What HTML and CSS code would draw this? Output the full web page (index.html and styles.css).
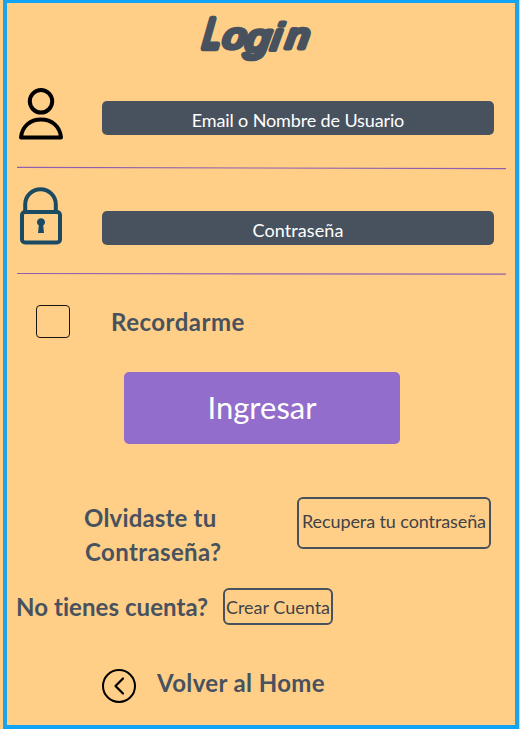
FILE: index.html
```html
<!DOCTYPE html>
<html lang="es">
<head>
<meta charset="utf-8">
<title>Login</title>
<link rel="stylesheet" href="styles.css">
</head>
<body>
<main class="screen">
  <h1 class="title">
    <svg width="130" height="64" viewBox="0 0 130 64"><g class="title-text"><text class="capital" transform="translate(10 42) skewX(-8) scale(.74 1)">L</text><text transform="translate(8.500 42) skewX(-8) scale(1.160 1)"><tspan x="18.500" y="0">o</tspan><tspan class="tail" x="38" y="2.500">g</tspan><tspan class="stem" x="60" y="1.500">i</tspan><tspan x="73" y="0">n</tspan></text></g></svg>
  </h1>
  <form class="form">
    <div class="field field-user">
      <svg class="icon-user" width="46" height="54" viewBox="0 0 46 54" fill="none" stroke="#000" stroke-width="4" stroke-linejoin="round"><circle cx="23" cy="14.300" r="11.200"/><path d="M3 50.500C4 39.500 12 32.500 23 32.500s19 7 20 18Z"/></svg>
      <div class="input">Email o Nombre de Usuario</div>
    </div>
    <svg class="rule" width="490" height="4" viewBox="0 0 490 4"><path d="M0 1.400L489 2.600"/></svg>
    <div class="field field-lock">
      <svg class="icon-lock" width="46" height="60" viewBox="0 0 46 60" fill="none" stroke="#1b4b63" stroke-width="4"><path d="M7.200 26V18.500a15.300 15.300 0 0 1 30.600 0v7.500"/><rect x="4" y="26" width="38" height="30.500" rx="3"/><path d="M23 32.200a4 4 0 0 0-2.200 7.300L20 47h6l-.8-7.500a4 4 0 0 0-2.200-7.300Z" fill="#1b4b63" stroke="none"/></svg>
      <div class="input password">Contraseña</div>
    </div>
    <svg class="rule rule-last" width="490" height="4" viewBox="0 0 490 4"><path d="M0 1.500L489 2.200"/></svg>
    <div class="remember"><span class="box"></span><span class="label">Recordarme</span></div>
    <button class="submit" type="button">Ingresar</button>
  </form>
  <div class="recover">
    <p class="label question">Olvidaste tu<br><span class="second">Contraseña?</span></p>
    <button class="outline big" type="button">Recupera tu contraseña</button>
  </div>
  <div class="signup">
    <span class="label">No tienes cuenta?</span>
    <button class="outline small" type="button">Crear Cuenta</button>
  </div>
  <div class="home">
    <svg width="36" height="36" viewBox="0 0 36 36" fill="none" stroke="#000" stroke-width="2"><circle cx="18" cy="18" r="16"/><path d="M22 10.500L14.500 18l7.500 7.500" stroke-width="2.200" stroke-linecap="round" stroke-linejoin="round"/></svg>
    <span class="label">Volver al Home</span>
  </div>
</main>
</body>
</html>
```
FILE: styles.css
```css
* { box-sizing: border-box; }
body { margin: 0; background: #ffcf88; font-family: Lato, "Liberation Sans", sans-serif; font-variant-ligatures: none; }
svg { display: block; flex: none; }
.screen { display: flex; flex-direction: column; width: 516px; height: 729px; margin-left: 3px; border: 4px solid #1fa2e8; border-top: 3px solid #0fa4f5; border-bottom-color: #0fa4f5; overflow: hidden; }
.title { margin: 3px 0 0 185px; height: 64px; }
.title-text { font: italic 400 35px "Liberation Sans", sans-serif; fill: #48525e; stroke: #48525e; stroke-width: 4.800px; stroke-linejoin: round; stroke-linecap: round; }
.capital { font-size: 42px; stroke-width: 6.500px; }
.tail { font-size: 38px; }
.stem { font-size: 38px; stroke-width: 4px; }
.form { display: flex; flex-direction: column; }
.field { display: flex; padding-left: 11px; }
.field-user { height: 79px; padding-top: 17px; }
.field-lock { height: 102px; padding-top: 16px; }
.input { width: 392px; height: 34px; margin-left: 38px; border-radius: 5px; background: #48525e; color: #fff; font-size: 18px; line-height: 38px; letter-spacing: -.13px; text-align: center; }
.field-user .input { margin-top: 14px; }
.field-lock .input { margin-top: 25px; }
.field-lock .password { letter-spacing: .1px; }
.rule { margin: 17px 0 0 10px; stroke: #8f60b0; stroke-width: 1.2px; }
.rule-last { margin-top: 0; }
.label { color: #48525e; font-size: 24px; font-weight: 700; line-height: 34px; white-space: nowrap; letter-spacing: .38px; }
.remember { display: flex; height: 67px; padding: 29px 0 0 29px; }
.box { width: 34px; height: 33px; border: 1.500px solid #171411; border-radius: 4px; }
.remember .label { margin-left: 41px; letter-spacing: .5px; }
.submit { width: 276px; height: 72px; margin: 29px 0 0 117px; padding: 0 0 2px; border: 0; border-radius: 5px; background: #936dcb; color: #fff; font: 400 31px/70px Lato, sans-serif; }
.recover { display: flex; height: 144px; padding-top: 53px; }
.question { width: 213px; margin: 4px 0 0 77px; letter-spacing: .18px; }
.second { margin-left: 1px; letter-spacing: .38px; }
.outline { padding: 0; border: 2px solid #48525e; border-radius: 6px; background: transparent; color: #3f4347; font: 400 18px Lato, sans-serif; white-space: nowrap; }
.big { width: 194px; height: 52px; padding-bottom: 4px; letter-spacing: -.1px; }
.signup { display: flex; height: 38px; padding-left: 9px; }
.signup .label { width: 207px; margin-top: 2px; letter-spacing: .06px; }
.small { width: 110px; height: 37px; }
.home { display: flex; margin: 42px 0 0 94px; }
.home .label { margin: -2px 0 0 20px; }
```
